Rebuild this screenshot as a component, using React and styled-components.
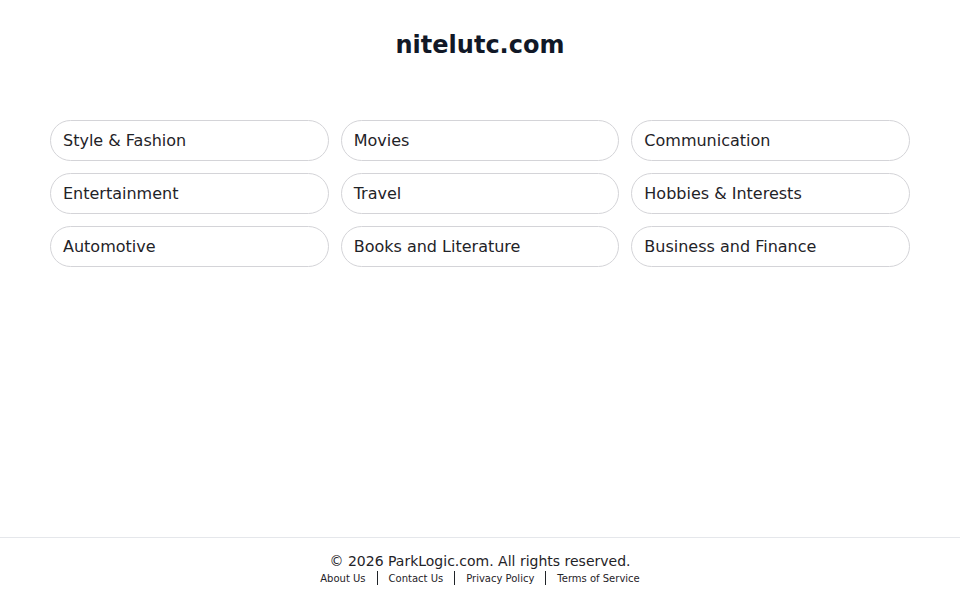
import styled, { createGlobalStyle } from "styled-components"

const Global = createGlobalStyle`
    html, body {
        margin: 0;
        padding: 0;
        background: #fff;
        font-family: "DejaVu Sans", sans-serif;
        color: #1f2328;
    }
`

const Page = styled.div`
    display: flex;
    flex-direction: column;
    min-height: 100vh;
`

const Main = styled.main`
    flex: 1;
    display: flex;
    flex-direction: column;
    align-items: center;
    padding: 31px 50px 0;
`

const Title = styled.h1`
    margin: 0;
    font-size: 24px;
    line-height: 28px;
    font-weight: bold;
    color: #111827;
`

const Grid = styled.div`
    display: grid;
    grid-template-columns: repeat(3, 1fr);
    gap: 12px;
    width: 100%;
    margin-top: 61px;
`

const Pill = styled.a`
    display: flex;
    align-items: center;
    height: 41px;
    box-sizing: border-box;
    padding: 0 12px;
    border: 1px solid #d4d4d8;
    border-radius: 21px;
    font-size: 16px;
    color: #1f2328;
    text-decoration: none;
    cursor: pointer;
`

const Footer = styled.footer`
    border-top: 1px solid #e5e7eb;
    padding: 15px 0 15px;
    text-align: center;
`

const Copy = styled.div`
    font-size: 14px;
    line-height: 16px;
    color: #1f2328;
`

const Links = styled.div`
    display: flex;
    justify-content: center;
    align-items: center;
    margin-top: 2px;
`

const Link = styled.a`
    font-size: 10px;
    line-height: 13px;
    color: #1f2328;
    text-decoration: none;
`

const Sep = styled.span`
    display: inline-block;
    width: 1px;
    height: 14px;
    background: #1f2328;
    margin: 0 11px;
`

const topics = [
    "Style & Fashion", "Movies", "Communication",
    "Entertainment", "Travel", "Hobbies & Interests",
    "Automotive", "Books and Literature", "Business and Finance",
]

const footerLinks = ["About Us", "Contact Us", "Privacy Policy", "Terms of Service"]

const App = () => {
    return (
        <Page>
            <Global />
            <Main>
                <Title>nitelutc.com</Title>
                <Grid>
                    {topics.map(t => <Pill key={t}>{t}</Pill>)}
                </Grid>
            </Main>
            <Footer>
                <Copy>© 2026 ParkLogic.com. All rights reserved.</Copy>
                <Links>
                    {footerLinks.map((l, i) => (
                        <span key={l} style={{ display: "contents" }}>
                            {i > 0 && <Sep />}
                            <Link>{l}</Link>
                        </span>
                    ))}
                </Links>
            </Footer>
        </Page>
    )
}

export default App
